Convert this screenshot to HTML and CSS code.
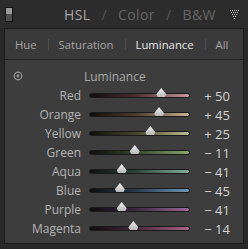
FILE: index.html
```html
<!DOCTYPE html>
<html lang="en">
<head>
  <meta charset="UTF-8">
  <title>HSL Luminance</title>
  <link rel="stylesheet" href="styles.css">
</head>
<body>
  <!-- Panel header -->
  <div class="header">
    <div class="switch"><span></span></div>
    <div class="title">
      <span class="active">HSL</span>
      <span class="sep">/</span>
      <span>Color</span>
      <span class="sep">/</span>
      <span>B&amp;W</span>
    </div>
    <svg class="collapse" width="10" height="9" viewBox="0 0 10 9">
      <g fill="#c8c8c8">
        <rect x="0" y="0" width="1" height="1"/><rect x="2" y="0" width="1" height="1"/>
        <rect x="4" y="0" width="1" height="1"/><rect x="6" y="0" width="1" height="1"/>
        <rect x="8" y="0" width="1" height="1"/>
        <rect x="1" y="2" width="1" height="1"/><rect x="3" y="2" width="1" height="1"/>
        <rect x="5" y="2" width="1" height="1"/><rect x="7" y="2" width="1" height="1"/>
        <rect x="2" y="4" width="1" height="1"/><rect x="4" y="4" width="1" height="1"/>
        <rect x="6" y="4" width="1" height="1"/>
        <rect x="3" y="6" width="1" height="1"/><rect x="5" y="6" width="1" height="1"/>
        <rect x="4" y="8" width="1" height="1"/>
      </g>
    </svg>
  </div>

  <div class="panel">
    <div class="tabs">
      <span class="tab">Hue</span>
      <span class="bar"></span>
      <span class="tab">Saturation</span>
      <span class="bar"></span>
      <span class="tab current">Luminance</span>
      <span class="bar"></span>
      <span class="tab">All</span>
    </div>

    <div class="content">
      <div class="section-head">
        <svg class="target" width="10" height="10" viewBox="0 0 10 10">
          <circle cx="5" cy="5" r="3.8" fill="none" stroke="#9a9a9a" stroke-width="1.2"/>
          <circle cx="5" cy="5" r="1.4" fill="#9a9a9a"/>
        </svg>
        <span class="section-title">Luminance</span>
      </div>

      <div class="row">
        <span class="label">Red</span>
        <div class="track red"><span class="thumb" style="left: 72%"></span></div>
        <span class="value">+ 50</span>
      </div>
      <div class="row">
        <span class="label">Orange</span>
        <div class="track orange"><span class="thumb" style="left: 69.8%"></span></div>
        <span class="value">+ 45</span>
      </div>
      <div class="row">
        <span class="label">Yellow</span>
        <div class="track yellow"><span class="thumb" style="left: 61%"></span></div>
        <span class="value">+ 25</span>
      </div>
      <div class="row">
        <span class="label">Green</span>
        <div class="track green"><span class="thumb" style="left: 45.2%"></span></div>
        <span class="value">&minus; 11</span>
      </div>
      <div class="row">
        <span class="label">Aqua</span>
        <div class="track aqua"><span class="thumb" style="left: 32%"></span></div>
        <span class="value">&minus; 41</span>
      </div>
      <div class="row">
        <span class="label">Blue</span>
        <div class="track blue"><span class="thumb" style="left: 30.2%"></span></div>
        <span class="value">&minus; 45</span>
      </div>
      <div class="row">
        <span class="label">Purple</span>
        <div class="track purple"><span class="thumb" style="left: 32%"></span></div>
        <span class="value">&minus; 41</span>
      </div>
      <div class="row">
        <span class="label">Magenta</span>
        <div class="track magenta"><span class="thumb" style="left: 43.8%"></span></div>
        <span class="value">&minus; 14</span>
      </div>
    </div>
  </div>
</body>
</html>
```
FILE: styles.css
```css
/* General Styling */
body {
  margin: 0;
  width: 248px;
  height: 249px;
  overflow: hidden;
  background: #282828;
  font-family: 'Open Sans', 'DejaVu Sans', sans-serif;
  color: #b8b8b8;
}

.header {
  height: 28px;
  display: flex;
  align-items: center;
  background: #2c2c2c;
}

.switch {
  width: 6px;
  height: 13px;
  margin-left: 5px;
  border: 1px solid #141414;
  background: #505050;
  display: flex;
}

.switch span {
  width: 6px;
  height: 6px;
  background: #9a9a9a;
}

.title {
  display: flex;
  gap: 11px;
  margin-left: 51px;
  font-size: 14px;
  color: #666;
  letter-spacing: 0.4px;
}

.title .active {
  color: #a8a8a8;
}

.title .sep {
  color: #555;
}

.collapse {
  margin-left: auto;
  margin-right: 8px;
}

.panel {
  margin: 0 4px;
  height: 214px;
  border: 1px solid #1c1c1c;
  background: #3b3b3b;
}

.tabs {
  height: 30px;
  display: flex;
  align-items: center;
  padding-left: 10px;
  border-bottom: 1px solid #232323;
  background: #3a3a3a;
  font-size: 11.3px;
}

.tab {
  color: #a4a4a4;
}

.tab.current {
  color: #e8e8e8;
}

.bar {
  width: 1px;
  height: 11px;
  margin: 0 10px 0 11px;
  background: #4e4e4e;
}

.content {
  padding-top: 9px;
  background: #3d3d3d;
  height: 173px;
}

.section-head {
  display: flex;
  align-items: center;
  height: 14px;
  margin-bottom: 3px;
}

.target {
  margin-left: 8px;
}

.section-title {
  margin-left: 61px;
  font-size: 12px;
  color: #aaa;
}

.row {
  height: 19px;
  display: flex;
  align-items: center;
}

.label {
  width: 76px;
  text-align: right;
  font-size: 12px;
  color: #b4b4b4;
}

.track {
  position: relative;
  width: 99px;
  height: 3px;
  margin-left: 8px;
  border: 1px solid #1a1a1a;
  border-radius: 3px;
}

.thumb {
  position: absolute;
  top: -6px;
  width: 10px;
  height: 9px;
  margin-left: -5px;
  background: linear-gradient(#f0f0f0, #b8b8b8);
  clip-path: polygon(50% 0, 100% 70%, 85% 100%, 15% 100%, 0 70%);
}

.value {
  width: 40px;
  text-align: right;
  font-size: 13px;
  color: #d4d4d4;
}

.red { background: linear-gradient(to right, #0e0e0e, #4a2a2e 45%, #c4979d); }
.orange { background: linear-gradient(to right, #0e0e0e, #4a3a2a 45%, #c8b090); }
.yellow { background: linear-gradient(to right, #0e0e0e, #44442a 45%, #bcbc92); }
.green { background: linear-gradient(to right, #0e0e0e, #34422a 45%, #8aa46e); }
.aqua { background: linear-gradient(to right, #0e0e0e, #2a4238 45%, #86ae9c); }
.blue { background: linear-gradient(to right, #0e0e0e, #28384a 45%, #6e98b4); }
.purple { background: linear-gradient(to right, #0e0e0e, #3a2640 45%, #9a6a9c); }
.magenta { background: linear-gradient(to right, #0e0e0e, #44263a 45%, #a86484); }
```
